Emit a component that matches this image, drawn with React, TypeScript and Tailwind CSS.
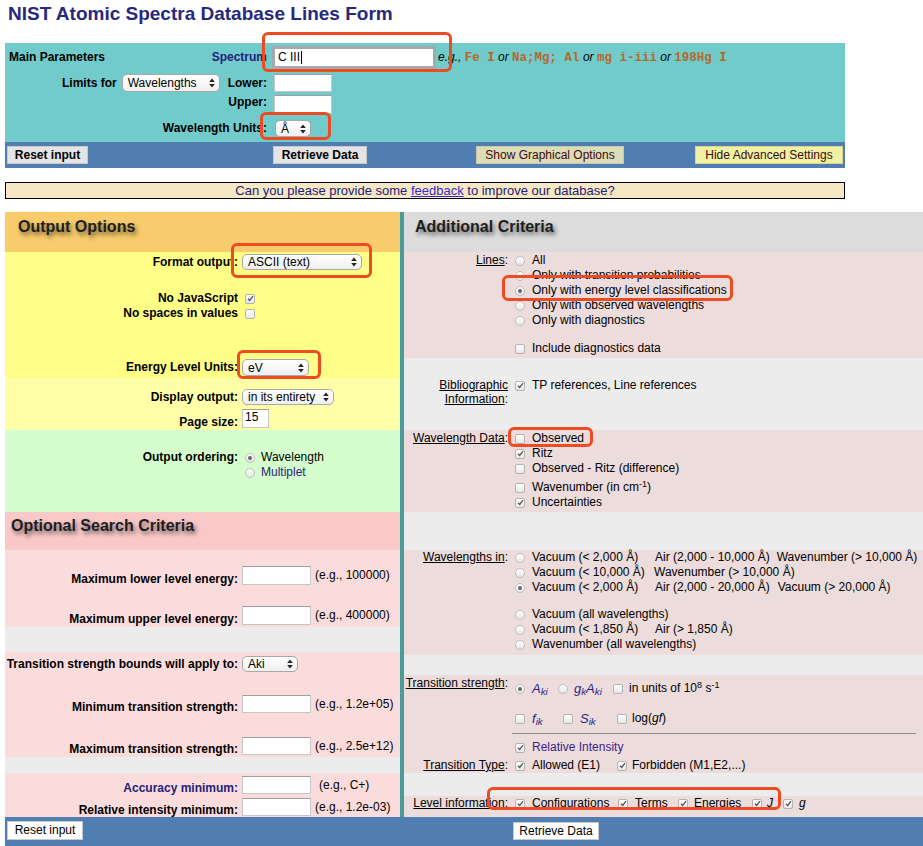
import React from "react";

type Kids = { children?: React.ReactNode };

function Check({ on = false }: { on?: boolean }) {
  return (
    <span className="inline-flex h-[10px] w-[10px] shrink-0 items-center justify-center rounded-[2px] border border-[#b3b3b3] bg-gradient-to-b from-white to-[#e8e8e8]">
      {on && (
        <svg width="7" height="7" viewBox="0 0 7 7">
          <path d="M1 3.7 L2.7 5.5 L6 1.2" fill="none" stroke="#555" strokeWidth="1.3" />
        </svg>
      )}
    </span>
  );
}

function Radio({ on = false }: { on?: boolean }) {
  return (
    <span className="inline-flex h-[10px] w-[10px] shrink-0 items-center justify-center rounded-full border border-[#bdbdbd] bg-gradient-to-b from-white to-[#e6e6e6]">
      {on && <span className="h-[4px] w-[4px] rounded-full bg-[#666]" />}
    </span>
  );
}

function Arrows() {
  return (
    <svg width="6" height="10" viewBox="0 0 6 10" className="shrink-0">
      <path d="M3 0.5 L5.8 4 H0.2 Z M0.2 6 H5.8 L3 9.5 Z" fill="#222" />
    </svg>
  );
}

function Select({ value, className }: { value: string; className: string }) {
  return (
    <div
      className={`flex shrink-0 items-center justify-between rounded-[5px] border border-[#a8a8a8] bg-gradient-to-b from-white to-[#efefef] pl-[5px] pr-[4px] font-normal leading-none text-black ${className}`}
    >
      <span className="whitespace-nowrap">{value}</span>
      <Arrows />
    </div>
  );
}

function Box({ className = "", children }: { className?: string } & Kids) {
  return (
    <div className={`flex shrink-0 items-center border border-[#c6c6c6] border-t-[#9e9e9e] bg-white ${className}`}>
      {children}
    </div>
  );
}

function Heading({ children }: Kids) {
  return (
    <span className="text-[16px] font-bold leading-[20px] text-[#1e1e1e] [text-shadow:2px_3px_4px_rgba(0,0,0,0.55)]">
      {children}
    </span>
  );
}

function LRow({
  label,
  children,
  className = "",
}: { label: React.ReactNode; className?: string } & Kids) {
  return (
    <div className={`flex items-center ${className}`}>
      <div className="w-[233px] shrink-0 whitespace-nowrap text-right font-bold">{label}</div>
      <div className="ml-[4px] flex items-center">{children}</div>
    </div>
  );
}

function InputRow({
  label,
  eg,
  className = "",
  labelClass = "",
  boxClass = "h-[19px]",
  egClass = "ml-[4px]",
}: {
  label: string;
  eg: string;
  className?: string;
  labelClass?: string;
  boxClass?: string;
  egClass?: string;
}) {
  return (
    <div className={`flex ${className}`}>
      <div className={`-mb-[2px] w-[233px] shrink-0 self-end whitespace-nowrap text-right font-bold ${labelClass}`}>
        {label}
      </div>
      <Box className={`ml-[4px] w-[69px] ${boxClass}`} />
      <div className={`mt-[2px] whitespace-nowrap ${egClass}`}>{eg}</div>
    </div>
  );
}

function RLabel({ children }: Kids) {
  return (
    <div className="w-[108px] shrink-0 whitespace-nowrap pr-[4px] text-right">
      {children ? (
        <>
          <span className="underline">{children}</span>:
        </>
      ) : null}
    </div>
  );
}

function Opt({
  radio = false,
  on = false,
  children,
  className = "",
}: { radio?: boolean; on?: boolean; className?: string } & Kids) {
  return (
    <div className={`flex h-[15px] items-center whitespace-nowrap ${className}`}>
      {radio ? <Radio on={on} /> : <Check on={on} />}
      <span className="ml-[7px]">{children}</span>
    </div>
  );
}

function Mark({ className }: { className: string }) {
  return <div className={`pointer-events-none absolute rounded-[6px] border-[3px] border-[#ee4b22] ${className}`} />;
}

export default function App() {
  return (
    <div className="relative h-[846px] w-full overflow-hidden bg-white font-['Liberation_Sans',Arial,sans-serif] text-[12px] leading-[15px] text-black">
      <h1 className="h-[43px] pl-[8px] pt-[3px] text-[19px] font-bold leading-[22px] text-[#28287c]">
        NIST Atomic Spectra Database Lines Form
      </h1>

      {/* Main parameters */}
      <div className="ml-[5px] w-[840px]">
        <div className="h-[99px] bg-[#72cbcb] pt-[3px]">
          <div className="flex h-[23px] items-center">
            <div className="flex w-[262px] shrink-0 justify-between pl-[4px] font-bold">
              <span>Main Parameters</span>
              <span className="text-[#22227a]">Spectrum</span>
            </div>
            <div className="ml-[5px] flex h-[23px] w-[164px] items-center border-[3px] border-[#a2abab] bg-white pl-[3px]">
              C III<span className="ml-[1px] h-[13px] w-px bg-black" />
            </div>
            <div className="ml-[2px] whitespace-nowrap">
              <i>e.g.,</i>{" "}
              <b className="font-['Liberation_Mono',monospace] text-[12.5px] text-[#b3692e]">Fe I</b> <i>or</i>{" "}
              <b className="font-['Liberation_Mono',monospace] text-[12.5px] text-[#b3692e]">Na;Mg; Al</b> <i>or</i>{" "}
              <b className="font-['Liberation_Mono',monospace] text-[12.5px] text-[#b3692e]">mg i-iii</b> <i>or</i>{" "}
              <b className="font-['Liberation_Mono',monospace] text-[12.5px] text-[#b3692e]">198Hg I</b>
            </div>
          </div>
          <div className="mt-[5px] flex h-[18px] items-center">
            <div className="flex w-[262px] shrink-0 items-center justify-end font-bold">
              <span>Limits for</span>
              <Select className="ml-[5px] h-[18px] w-[98px]" value="Wavelengths" />
              <span className="ml-[8px]">Lower:</span>
            </div>
            <Box className="ml-[7px] h-[18px] w-[58px]" />
          </div>
          <div className="mt-[3px] flex h-[19px]">
            <div className="w-[262px] shrink-0 text-right font-bold">Upper:</div>
            <Box className="ml-[7px] h-[19px] w-[58px]" />
          </div>
          <div className="mt-[6px] flex h-[17px] items-center">
            <div className="w-[262px] shrink-0 text-right font-bold">Wavelength Units:</div>
            <Select className="ml-[8px] h-[17px] w-[36px]" value="Å" />
          </div>
        </div>
        <div className="flex h-[26px] items-center bg-[#507eb2] pl-[2px]">
          <div className="h-[18px] w-[81px] border border-[#c8c8c8] bg-[#e4e4e4] text-center font-bold leading-[16px]">
            Reset input
          </div>
          <div className="ml-[185px] h-[18px] w-[94px] border border-[#c8c8c8] bg-[#e4e4e4] text-center font-bold leading-[16px]">
            Retrieve Data
          </div>
          <div className="ml-[109px] h-[18px] w-[148px] border border-[#c9c9a8] bg-[#dcdcb9] text-center leading-[16px] text-[#3d0a0a]">
            Show Graphical Options
          </div>
          <div className="ml-[71px] h-[18px] w-[148px] border border-[#d6d690] bg-[#f1f1a3] text-center leading-[16px] text-[#3d0a0a]">
            Hide Advanced Settings
          </div>
        </div>

        <div className="mt-[14px] h-[17px] border border-black bg-[#f6e8c4] text-center text-[13px] leading-[15px] text-[#23207a]">
          Can you please provide some <span className="text-[#3a2ad0] underline">feedback</span> to improve our database?
        </div>
      </div>

      {/* Two columns */}
      <div className="ml-[5px] mt-[13px] flex">
        {/* Left */}
        <div className="w-[395px] shrink-0">
          <div className="h-[40px] bg-[#f8cc6c] pl-[13px] pt-[5px]">
            <Heading>Output Options</Heading>
          </div>
          <div className="h-[126px] bg-[#ffff88] pt-[2px]">
            <LRow label="Format output:">
              <Select className="h-[16px] w-[120px]" value="ASCII (text)" />
            </LRow>
            <div className="mt-[21px]">
              <LRow label="No JavaScript" className="h-[15px]">
                <span className="ml-[3px] flex"><Check on /></span>
              </LRow>
              <LRow label="No spaces in values" className="h-[15px]">
                <span className="ml-[3px] flex"><Check /></span>
              </LRow>
            </div>
            <LRow label="Energy Level Units:" className="mt-[38px]">
              <Select className="h-[17px] w-[67px]" value="eV" />
            </LRow>
          </div>
          <div className="h-[52px] bg-[#ffffa8] pt-[11px]">
            <LRow label="Display output:">
              <Select className="h-[16px] w-[92px] pl-[4px] pr-[2px]" value="in its entirety" />
            </LRow>
            <div className="mt-[4px] flex">
              <div className="-mb-[2px] w-[233px] shrink-0 self-end text-right font-bold">Page size:</div>
              <Box className="ml-[4px] h-[19px] w-[27px] items-start pl-[2px]">15</Box>
            </div>
          </div>
          <div className="h-[82px] bg-[#d4ffcc] pt-[20px]">
            <LRow label="Output ordering:" className="h-[15px]">
              <span className="ml-[3px] flex items-center">
                <Radio on />
                <span className="ml-[6px]">Wavelength</span>
              </span>
            </LRow>
            <LRow label="" className="h-[15px]">
              <span className="ml-[3px] flex items-center">
                <Radio />
                <span className="ml-[6px] text-[#2b1d7a]">Multiplet</span>
              </span>
            </LRow>
          </div>
          <div className="h-[38px] bg-[#f9c9c9] pl-[6px] pt-[4px]">
            <Heading>Optional Search Criteria</Heading>
          </div>
          <div className="h-[77px] bg-[#fbdcdc] pt-[16px]">
            <InputRow label="Maximum lower level energy:" eg="(e.g., 100000)" />
            <InputRow className="mt-[21px]" label="Maximum upper level energy:" eg="(e.g., 400000)" />
          </div>
          <div className="h-[25px] bg-[#ececec]" />
          <div className="h-[105px] bg-[#fbdcdc] pt-[4px]">
            <LRow label="Transition strength bounds will apply to:">
              <Select className="h-[16px] w-[56px]" value="Aki" />
            </LRow>
            <InputRow className="mt-[23px]" boxClass="h-[18px]" label="Minimum transition strength:" eg="(e.g., 1.2e+05)" />
            <InputRow className="mt-[24px]" boxClass="h-[18px]" label="Maximum transition strength:" eg="(e.g., 2.5e+12)" />
          </div>
          <div className="h-[16px] bg-[#ececec]" />
          <div className="h-[44px] bg-[#fbdcdc] pt-[3px]">
            <InputRow
              boxClass="h-[18px]"
              labelClass="text-[#22227a]"
              egClass="ml-[8px]"
              label="Accuracy minimum:"
              eg="(e.g., C+)"
            />
            <InputRow className="mt-[4px]" boxClass="h-[18px]" label="Relative intensity minimum:" eg="(e.g., 1.2e-03)" />
          </div>
        </div>

        <div className="w-[4px] shrink-0 bg-[#4a9b9b]" />

        {/* Right */}
        <div className="min-w-0 flex-1">
          <div className="h-[40px] bg-[#dcdcdc] pl-[11px] pt-[5px]">
            <Heading>Additional Criteria</Heading>
          </div>
          <div className="h-[106px] bg-[#ecdcdc] pt-[1px]">
            <div className="flex">
              <RLabel>Lines</RLabel>
              <div className="pl-[3px]">
                <Opt radio>All</Opt>
                <Opt radio>Only with transition probabilities</Opt>
                <Opt radio on>Only with energy level classifications</Opt>
                <Opt radio>Only with observed wavelengths</Opt>
                <Opt radio>Only with diagnostics</Opt>
                <Opt className="mt-[13px]">Include diagnostics data</Opt>
              </div>
            </div>
          </div>
          <div className="h-[72px] bg-[#ececec] pt-[20px]">
            <div className="flex">
              <div className="w-[108px] shrink-0 pr-[4px] text-right leading-[14px]">
                <span className="underline">Bibliographic</span>
                <br />
                <span className="underline">Information</span>:
              </div>
              <div className="pl-[3px]">
                <Opt on>TP references, Line references</Opt>
              </div>
            </div>
          </div>
          <div className="h-[82px] bg-[#ecdcdc] pt-[1px]">
            <div className="flex">
              <RLabel>Wavelength Data</RLabel>
              <div className="pl-[3px]">
                <Opt>Observed</Opt>
                <Opt on>Ritz</Opt>
                <Opt>Observed - Ritz (difference)</Opt>
                <Opt className="mt-[4px]">
                  Wavenumber (in cm<sup>-1</sup>)
                </Opt>
                <Opt on>Uncertainties</Opt>
              </div>
            </div>
          </div>
          <div className="h-[38px] bg-[#ececec]" />
          <div className="h-[105px] bg-[#ecdcdc]">
            <div className="flex">
              <RLabel>Wavelengths in</RLabel>
              <div className="pl-[3px]">
                <Opt radio>
                  <span className="inline-block w-[123px]">Vacuum (&lt; 2,000 Å)</span>
                  Air (2,000 - 10,000 Å)
                  <span className="ml-[7px]">Wavenumber (&gt; 10,000 Å)</span>
                </Opt>
                <Opt radio>
                  <span className="inline-block w-[122px]">Vacuum (&lt; 10,000 Å)</span>
                  Wavenumber (&gt; 10,000 Å)
                </Opt>
                <Opt radio on>
                  <span className="inline-block w-[123px]">Vacuum (&lt; 2,000 Å)</span>
                  Air (2,000 - 20,000 Å)
                  <span className="ml-[8px]">Vacuum (&gt; 20,000 Å)</span>
                </Opt>
                <Opt radio className="mt-[12px]">
                  Vacuum (all wavelengths)
                </Opt>
                <Opt radio>
                  <span className="inline-block w-[123px]">Vacuum (&lt; 1,850 Å)</span>
                  Air (&gt; 1,850 Å)
                </Opt>
                <Opt radio>Wavenumber (all wavelengths)</Opt>
              </div>
            </div>
          </div>
          <div className="h-[20px] bg-[#ececec]" />
          <div className="h-[98px] bg-[#ecdcdc] pt-[1px]">
            <div className="flex">
              <RLabel>Transition strength</RLabel>
              <div className="flex h-[15px] items-center whitespace-nowrap pl-[3px] mt-[5px]">
                <Radio on />
                <span className="ml-[7px] inline-block w-[26px] text-[13px] italic text-[#2a1f8a]">
                  A<sub>ki</sub>
                </span>
                <Radio />
                <span className="ml-[6px] inline-block w-[39px] text-[13px] italic text-[#2a1f8a]">
                  g<sub>k</sub>A<sub>ki</sub>
                </span>
                <Check />
                <span className="ml-[6px]">
                  in units of 10<sup>8</sup> s<sup>-1</sup>
                </span>
              </div>
            </div>
            <div className="mt-[15px] flex">
              <RLabel />
              <div className="flex h-[15px] items-center whitespace-nowrap pl-[3px]">
                <Check />
                <span className="ml-[7px] inline-block w-[31px] text-[13px] italic text-[#2a1f8a]">
                  f<sub>ik</sub>
                </span>
                <Check />
                <span className="ml-[7px] inline-block w-[37px] text-[13px] italic text-[#2a1f8a]">
                  S<sub>ik</sub>
                </span>
                <Check />
                <span className="ml-[5px]">
                  log(<i>gf</i>)
                </span>
              </div>
            </div>
            <div className="flex">
              <RLabel />
              <div className="mr-[7px] mt-[7px] h-px flex-1 bg-[#8a8a8a]" />
            </div>
            <div className="mt-[6px] flex">
              <RLabel />
              <div className="pl-[3px]">
                <Opt on>
                  <span className="text-[#3b1d8a]">Relative Intensity</span>
                </Opt>
              </div>
            </div>
            <div className="mt-[3px] flex">
              <RLabel>Transition Type</RLabel>
              <div className="flex h-[15px] items-center whitespace-nowrap pl-[3px]">
                <Check on />
                <span className="ml-[7px] inline-block w-[85px]">Allowed (E1)</span>
                <Check on />
                <span className="ml-[5px]">Forbidden (M1,E2,...)</span>
              </div>
            </div>
          </div>
          <div className="h-[23px] bg-[#ececec]" />
          <div className="h-[21px] bg-[#ecdcdc]">
            <div className="flex">
              <RLabel>Level information</RLabel>
              <div className="flex h-[15px] items-center whitespace-nowrap pl-[3px]">
                <Check on />
                <span className="ml-[7px] inline-block w-[86px]">Configurations</span>
                <Check on />
                <span className="ml-[7px] inline-block w-[43px]">Terms</span>
                <Check on />
                <span className="ml-[6px] inline-block w-[58px]">Energies</span>
                <Check on />
                <span className="ml-[5px] inline-block w-[16px] italic">J</span>
                <Check on />
                <span className="ml-[6px] italic">g</span>
              </div>
            </div>
          </div>
        </div>
      </div>

      {/* Bottom bar */}
      <div className="ml-[5px] flex h-[29px] items-start bg-[#507eb2]">
        <div className="ml-[2px] mt-[4px] h-[19px] w-[76px] border border-[#c8c8c8] bg-white text-center leading-[17px]">
          Reset input
        </div>
        <div className="ml-[430px] mt-[5px] h-[18px] w-[86px] border border-[#c8c8c8] bg-white text-center leading-[16px]">
          Retrieve Data
        </div>
      </div>

      {/* Red annotation marks */}
      <Mark className="left-[262px] top-[32px] h-[40px] w-[190px]" />
      <Mark className="left-[260px] top-[112px] h-[28px] w-[71px]" />
      <Mark className="left-[231px] top-[243px] h-[35px] w-[141px]" />
      <Mark className="left-[237px] top-[350px] h-[29px] w-[84px]" />
      <Mark className="left-[502px] top-[275px] h-[26px] w-[231px]" />
      <Mark className="left-[508px] top-[427px] h-[20px] w-[85px]" />
      <Mark className="left-[487px] top-[787px] h-[23px] w-[294px]" />
    </div>
  );
}
